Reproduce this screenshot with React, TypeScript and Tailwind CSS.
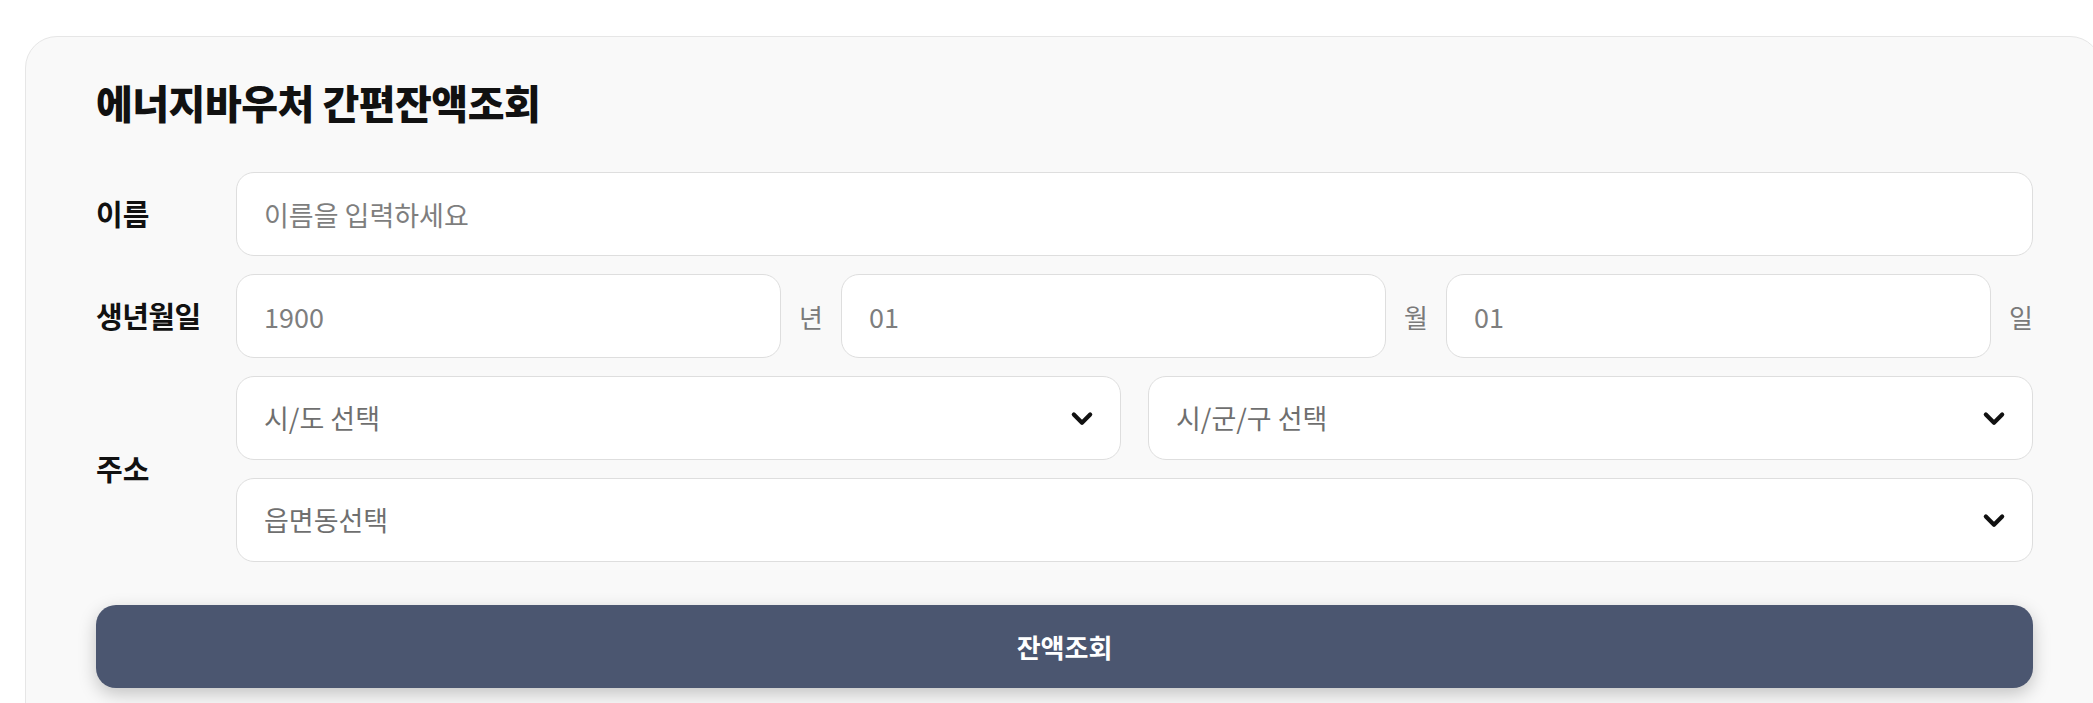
import React from 'react';

const font = { fontFamily: '"Noto Sans CJK KR", "Noto Sans", sans-serif' };

const Chevron = () => (
  <svg width="28" height="28" viewBox="0 0 24 24" fill="none" className="shrink-0">
    <path d="M5 9l7 7 7-7" stroke="#111" strokeWidth="3.6" strokeLinecap="round" strokeLinejoin="round" />
  </svg>
);

const TextField = ({ placeholder }: { placeholder: string }) => (
  <input
    type="text"
    placeholder={placeholder}
    className="h-[84px] w-full min-w-0 flex-1 rounded-[18px] border border-[#dedede] bg-white px-[27px] text-[27px] text-[#222] placeholder:text-[#7e7e7e] focus:outline-none"
  />
);

const SelectBox = ({ label, grow = true }: { label: string; grow?: boolean }) => (
  <button
    type="button"
    className={`flex h-[84px] w-full min-w-0 shrink-0 items-center justify-between rounded-[18px] border border-[#dedede] bg-white pl-[27px] pr-[24px] text-left text-[27px] text-[#6f6f6f] ${grow ? 'flex-1' : ''}`}
  >
    <span>{label}</span>
    <Chevron />
  </button>
);

const Unit = ({ children }: { children: React.ReactNode }) => (
  <span className="w-[24px] shrink-0 text-center text-[26px] text-[#7a7a7a]">{children}</span>
);

export default function App() {
  return (
    <div className="min-h-screen overflow-hidden bg-white" style={font}>
      <div className="ml-[25px] mt-[36px] w-[2077px] rounded-[32px] border border-[#e6e6e6] bg-[#f9f9f9] pb-[60px] pl-[70px] pr-[68px] pt-[42px]">
        {/* 제목 */}
        <h1 className="text-[40px] font-extrabold leading-[47px] tracking-[-0.5px] text-[#111]">에너지바우처 간편잔액조회</h1>

        <div className="mt-[46px] flex flex-col gap-[18px]">
          {/* 이름 */}
          <div className="flex items-center">
            <label className="w-[140px] shrink-0 text-[29px] font-bold text-[#111]">이름</label>
            <TextField placeholder="이름을 입력하세요" />
          </div>

          {/* 생년월일 */}
          <div className="flex items-center">
            <label className="w-[140px] shrink-0 text-[29px] font-bold tracking-[-0.5px] text-[#111]">생년월일</label>
            <div className="flex flex-1 items-center gap-[18px]">
              <TextField placeholder="1900" />
              <Unit>년</Unit>
              <TextField placeholder="01" />
              <Unit>월</Unit>
              <TextField placeholder="01" />
              <Unit>일</Unit>
            </div>
          </div>

          {/* 주소 */}
          <div className="flex items-center">
            <label className="w-[140px] shrink-0 text-[29px] font-bold text-[#111]">주소</label>
            <div className="flex flex-1 flex-col gap-[18px]">
              <div className="flex gap-[27px]">
                <SelectBox label="시/도 선택" />
                <SelectBox label="시/군/구 선택" />
              </div>
              <SelectBox label="읍면동선택" grow={false} />
            </div>
          </div>
        </div>

        <button
          type="button"
          className="mt-[43px] flex h-[83px] w-full items-center justify-center rounded-[20px] bg-[#4b5670] text-[26px] font-bold text-white shadow-[0_6px_18px_rgba(0,0,0,0.22)]"
        >
          잔액조회
        </button>
      </div>
    </div>
  );
}
